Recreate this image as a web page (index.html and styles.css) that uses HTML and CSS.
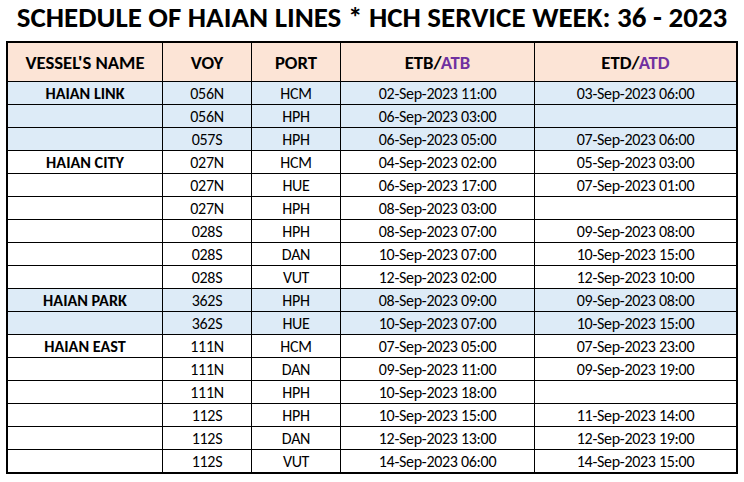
FILE: index.html
```html
<!DOCTYPE html>
<html>
<head>
<meta charset="utf-8">
<link rel="stylesheet" href="styles.css">
</head>
<body>
<h1 class="title">SCHEDULE OF HAIAN LINES * HCH SERVICE WEEK: 36 - 2023</h1>
<table class="sched">
  <colgroup>
    <col class="c1"><col class="c2"><col class="c3"><col class="c4"><col class="c5">
  </colgroup>
  <thead>
    <tr>
      <th>VESSEL'S NAME</th><th>VOY</th><th>PORT</th>
      <th>ETB/<span class="act">ATB</span></th><th>ETD/<span class="act">ATD</span></th>
    </tr>
  </thead>
  <tbody>
    <tr class="blue"><td class="ves">HAIAN LINK</td><td>056N</td><td>HCM</td><td>02-Sep-2023 11:00</td><td>03-Sep-2023 06:00</td></tr>
    <tr class="blue"><td class="ves"></td><td>056N</td><td>HPH</td><td>06-Sep-2023 03:00</td><td></td></tr>
    <tr class="blue"><td class="ves"></td><td>057S</td><td>HPH</td><td>06-Sep-2023 05:00</td><td>07-Sep-2023 06:00</td></tr>
    <tr><td class="ves">HAIAN CITY</td><td>027N</td><td>HCM</td><td>04-Sep-2023 02:00</td><td>05-Sep-2023 03:00</td></tr>
    <tr><td class="ves"></td><td>027N</td><td>HUE</td><td>06-Sep-2023 17:00</td><td>07-Sep-2023 01:00</td></tr>
    <tr><td class="ves"></td><td>027N</td><td>HPH</td><td>08-Sep-2023 03:00</td><td></td></tr>
    <tr><td class="ves"></td><td>028S</td><td>HPH</td><td>08-Sep-2023 07:00</td><td>09-Sep-2023 08:00</td></tr>
    <tr><td class="ves"></td><td>028S</td><td>DAN</td><td>10-Sep-2023 07:00</td><td>10-Sep-2023 15:00</td></tr>
    <tr><td class="ves"></td><td>028S</td><td>VUT</td><td>12-Sep-2023 02:00</td><td>12-Sep-2023 10:00</td></tr>
    <tr class="blue"><td class="ves">HAIAN PARK</td><td>362S</td><td>HPH</td><td>08-Sep-2023 09:00</td><td>09-Sep-2023 08:00</td></tr>
    <tr class="blue"><td class="ves"></td><td>362S</td><td>HUE</td><td>10-Sep-2023 07:00</td><td>10-Sep-2023 15:00</td></tr>
    <tr><td class="ves">HAIAN EAST</td><td>111N</td><td>HCM</td><td>07-Sep-2023 05:00</td><td>07-Sep-2023 23:00</td></tr>
    <tr><td class="ves"></td><td>111N</td><td>DAN</td><td>09-Sep-2023 11:00</td><td>09-Sep-2023 19:00</td></tr>
    <tr><td class="ves"></td><td>111N</td><td>HPH</td><td>10-Sep-2023 18:00</td><td></td></tr>
    <tr><td class="ves"></td><td>112S</td><td>HPH</td><td>10-Sep-2023 15:00</td><td>11-Sep-2023 14:00</td></tr>
    <tr><td class="ves"></td><td>112S</td><td>DAN</td><td>12-Sep-2023 13:00</td><td>12-Sep-2023 19:00</td></tr>
    <tr><td class="ves"></td><td>112S</td><td>VUT</td><td>14-Sep-2023 06:00</td><td>14-Sep-2023 15:00</td></tr>
  </tbody>
</table>
</body>
</html>
```

FILE: styles.css
```css
html, body {
  margin: 0;
  padding: 0;
  background: #ffffff;
}
body {
  font-family: Carlito, Calibri, Lato, "Liberation Sans", sans-serif;
  color: #000;
  width: 744px;
  height: 482px;
  overflow: hidden;
}
.title {
  margin: 0;
  box-sizing: border-box;
  height: 41px;
  padding-top: 3px;
  font-size: 29px;
  font-weight: 700;
  line-height: 29px;
  text-align: center;
  white-space: nowrap;
}
.sched {
  margin-left: 6px;
  width: 732px;
  box-sizing: border-box;
  table-layout: fixed;
  border-collapse: separate;
  border-spacing: 0;
  border: 2px solid #000;
  font-size: 16px;
  letter-spacing: -0.3px;
}
.c1 { width: 155px; }
.c2 { width: 89px; }
.c3 { width: 89px; }
.c4 { width: 194px; }
.c5 { width: 201px; }
.sched th, .sched td {
  padding: 0;
  text-align: center;
  white-space: nowrap;
  border-right: 1px solid #000;
  border-bottom: 1px solid #000;
  box-sizing: border-box;
}
.sched th:last-child, .sched td:last-child { border-right: none; }
.sched tbody tr:last-child td { border-bottom: none; }
.sched th {
  height: 39px;
  padding-top: 2px;
  line-height: 1;
  background: #fce4d6;
  font-weight: 700;
  font-size: 18.7px;
  letter-spacing: 0;
}
.sched td {
  height: 23px;
  padding-top: 2px;
  line-height: 20px;
}
.sched tbody tr:last-child td { height: 22px; }
.act { color: #7030a0; }
.blue td { background: #ddebf7; }
.ves { font-weight: 700; font-size: 16.2px; letter-spacing: 0; }
```
